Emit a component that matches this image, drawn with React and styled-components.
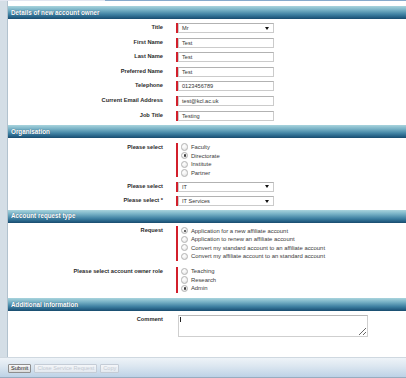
import React from "react";
import styled, { createGlobalStyle } from "styled-components";

const GlobalStyle = createGlobalStyle`
  html, body {
    margin: 0;
    padding: 0;
    background: #fff;
  }
  body {
    font-family: "Liberation Sans", Arial, sans-serif;
  }
`;

const Page = styled.div`
  width: 406px;
  height: 378px;
  display: flex;
  flex-direction: column;
  overflow: hidden;
  background: #fff;
`;

const TopLine = styled.div`
  display: flex;
  height: 1px;
  flex-shrink: 0;
`;

const TabEdge = styled.div`
  width: 105px;
  background: #e2e6f0;
`;

const RuleEdge = styled.div`
  flex: 1;
  background: #86aacb;
`;

const Body = styled.div`
  flex: 1;
  display: flex;
  background: #d4dee6;
`;

const Gutter = styled.div`
  width: 7px;
  border-right: 1px solid #b2c2ce;
`;

const Panel = styled.div`
  flex: 1;
  display: flex;
  flex-direction: column;
  padding-top: 5px;
  background: #fff;
`;

const SectionHeader = styled.div`
  height: ${(p) => p.$h || 13}px;
  line-height: ${(p) => p.$h || 13}px;
  padding-left: 3px;
  flex-shrink: 0;
  font-size: 6.3px;
  font-weight: bold;
  color: #fff;
  text-shadow: 0 0 1px rgba(0, 30, 60, 0.6);
  background: linear-gradient(#a9d4dd 0%, #78b2c6 30%, #3f81a2 65%, #215b80 90%, #1a4b6c 100%);
`;

const Fields = styled.div`
  display: flex;
  flex-direction: column;
  gap: ${(p) => p.$gap}px;
  padding-top: ${(p) => p.$top}px;
  padding-bottom: ${(p) => p.$bottom}px;
`;

const Row = styled.div`
  display: grid;
  grid-template-columns: 155px 1fr;
  column-gap: 13px;
  align-items: start;
`;

const Label = styled.div`
  text-align: right;
  font-size: 5.7px;
  font-weight: bold;
  line-height: 7px;
  padding-top: 1px;
  color: #2a2a2a;
  white-space: nowrap;
`;

const Field = styled.div`
  display: flex;
  width: 98px;
  height: ${(p) => p.$h || 10}px;
  box-sizing: border-box;
  border-left: 2px solid #d21f2b;
`;

const Box = styled.div`
  flex: 1;
  display: flex;
  align-items: center;
  justify-content: space-between;
  padding: 0 4px 0 3px;
  border: 1px solid #cbcbcb;
  border-top-color: #b2b2b2;
  background: #fff;
  font-size: 5.6px;
  color: #333;
  white-space: nowrap;
`;

const Arrow = styled.span`
  width: 0;
  height: 0;
  border-left: 2px solid transparent;
  border-right: 2px solid transparent;
  border-top: 3px solid #111;
`;

const Group = styled.div`
  display: flex;
  flex-direction: column;
  padding-left: 3px;
  border-left: 2px solid #d21f2b;
`;

const Option = styled.div`
  display: flex;
  align-items: center;
  gap: 2.5px;
  height: ${(p) => p.$h}px;
  font-size: 5.9px;
  color: #3a3a3a;
  white-space: nowrap;
`;

const Radio = styled.span`
  position: relative;
  width: 5.4px;
  height: 5.4px;
  border-radius: 50%;
  border: 0.6px solid #b4b4b4;
  background: radial-gradient(circle at 40% 35%, #fff 0%, #f3f3f3 45%, #d6d6d6 100%);
  flex-shrink: 0;

  &::after {
    content: "";
    display: ${(p) => (p.$on ? "block" : "none")};
    position: absolute;
    left: 1.6px;
    top: 1.6px;
    width: 2.2px;
    height: 2.2px;
    border-radius: 50%;
    background: #3a3a3a;
  }
`;

const CommentWrap = styled.div`
  position: relative;
  width: 190px;
  height: 22px;
  margin-left: 2px;

  &::after {
    content: "";
    position: absolute;
    left: 2px;
    top: 2px;
    width: 0.7px;
    height: 5px;
    background: #222;
  }
`;

const Comment = styled.textarea`
  display: block;
  width: 100%;
  height: 100%;
  box-sizing: border-box;
  margin: 0;
  padding: 0;
  border: 1px solid #cfcfcf;
  border-top-color: #b8b8b8;
  resize: both;
  outline: none;
  font: inherit;
`;

const Spacer = styled.div`
  flex: 1;
`;

const Toolbar = styled.div`
  height: 21px;
  flex-shrink: 0;
  display: flex;
  align-items: flex-start;
  gap: 3px;
  padding: 6px 0 0 8px;
  box-sizing: border-box;
  border-top: 1px solid #cfd8e0;
  border-bottom: 1px solid #98acc0;
  background: linear-gradient(#eef3f8 0%, #dbe6f0 45%, #bdd2e6 100%);
`;

const Button = styled.button`
  height: 9px;
  margin: 0;
  padding: 0 2px;
  font-family: "Liberation Sans", Arial, sans-serif;
  font-size: 5.6px;
  line-height: 7px;
  color: ${(p) => (p.disabled ? "#c3cad3" : "#1e1e1e")};
  border: 1px solid ${(p) => (p.disabled ? "#c4ccd6" : "#8e8e8e")};
  border-radius: 1px;
  background: ${(p) =>
    p.disabled
      ? "linear-gradient(#f4f6f9, #e4e9ef)"
      : "linear-gradient(#fafafa, #dadada)"};
  white-space: nowrap;
`;

const ownerFields = [
  { label: "Title", value: "Mr", select: true },
  { label: "First Name", value: "Test" },
  { label: "Last Name", value: "Test" },
  { label: "Preferred Name", value: "Test" },
  { label: "Telephone", value: "0123456789" },
  { label: "Current Email Address", value: "test@kcl.ac.uk" },
  { label: "Job Title", value: "Testing" },
];

const orgTypes = ["Faculty", "Directorate", "Institute", "Partner"];
const requests = [
  "Application for a new affiliate account",
  "Application to renew an affiliate account",
  "Convert my standard account to an affiliate account",
  "Convert my affiliate account to an standard account",
];
const roles = ["Teaching", "Research", "Admin"];

function RadioGroup({ items, checked, h }) {
  return (
    <Group>
      {items.map((item) => (
        <Option key={item} $h={h}>
          <Radio $on={item === checked} />
          {item}
        </Option>
      ))}
    </Group>
  );
}

function Select({ value }) {
  return (
    <Field>
      <Box>
        {value}
        <Arrow />
      </Box>
    </Field>
  );
}

export default function App() {
  return (
    <Page>
      <GlobalStyle />
      <TopLine>
        <TabEdge />
        <RuleEdge />
      </TopLine>
      <Body>
        <Gutter />
        <Panel>
          <SectionHeader>Details of new account owner</SectionHeader>
          <Fields $top={4} $bottom={4} $gap={4.6}>
            {ownerFields.map((f) => (
              <Row key={f.label}>
                <Label>{f.label}</Label>
                {f.select ? (
                  <Select value={f.value} />
                ) : (
                  <Field>
                    <Box>{f.value}</Box>
                  </Field>
                )}
              </Row>
            ))}
          </Fields>

          <SectionHeader>Organisation</SectionHeader>
          <Fields $top={5} $bottom={4} $gap={4.5}>
            <Row>
              <Label>Please select</Label>
              <RadioGroup items={orgTypes} checked="Directorate" h={8.7} />
            </Row>
            <Row>
              <Label>Please select</Label>
              <Select value="IT" />
            </Row>
            <Row>
              <Label>Please select *</Label>
              <Select value="IT Services" />
            </Row>
          </Fields>

          <SectionHeader $h={12.5}>Account request type</SectionHeader>
          <Fields $top={3.5} $bottom={5.5} $gap={6.5}>
            <Row>
              <Label>Request</Label>
              <RadioGroup
                items={requests}
                checked="Application for a new affiliate account"
                h={8.6}
              />
            </Row>
            <Row>
              <Label>Please select account owner role</Label>
              <RadioGroup items={roles} checked="Admin" h={8.5} />
            </Row>
          </Fields>

          <SectionHeader>Additional information</SectionHeader>
          <Fields $top={4} $bottom={0} $gap={0}>
            <Row>
              <Label>Comment</Label>
              <CommentWrap>
                <Comment readOnly />
              </CommentWrap>
            </Row>
          </Fields>
          <Spacer />
        </Panel>
      </Body>
      <Toolbar>
        <Button>Submit</Button>
        <Button disabled>Close Service Request</Button>
        <Button disabled>Copy</Button>
      </Toolbar>
    </Page>
  );
}
